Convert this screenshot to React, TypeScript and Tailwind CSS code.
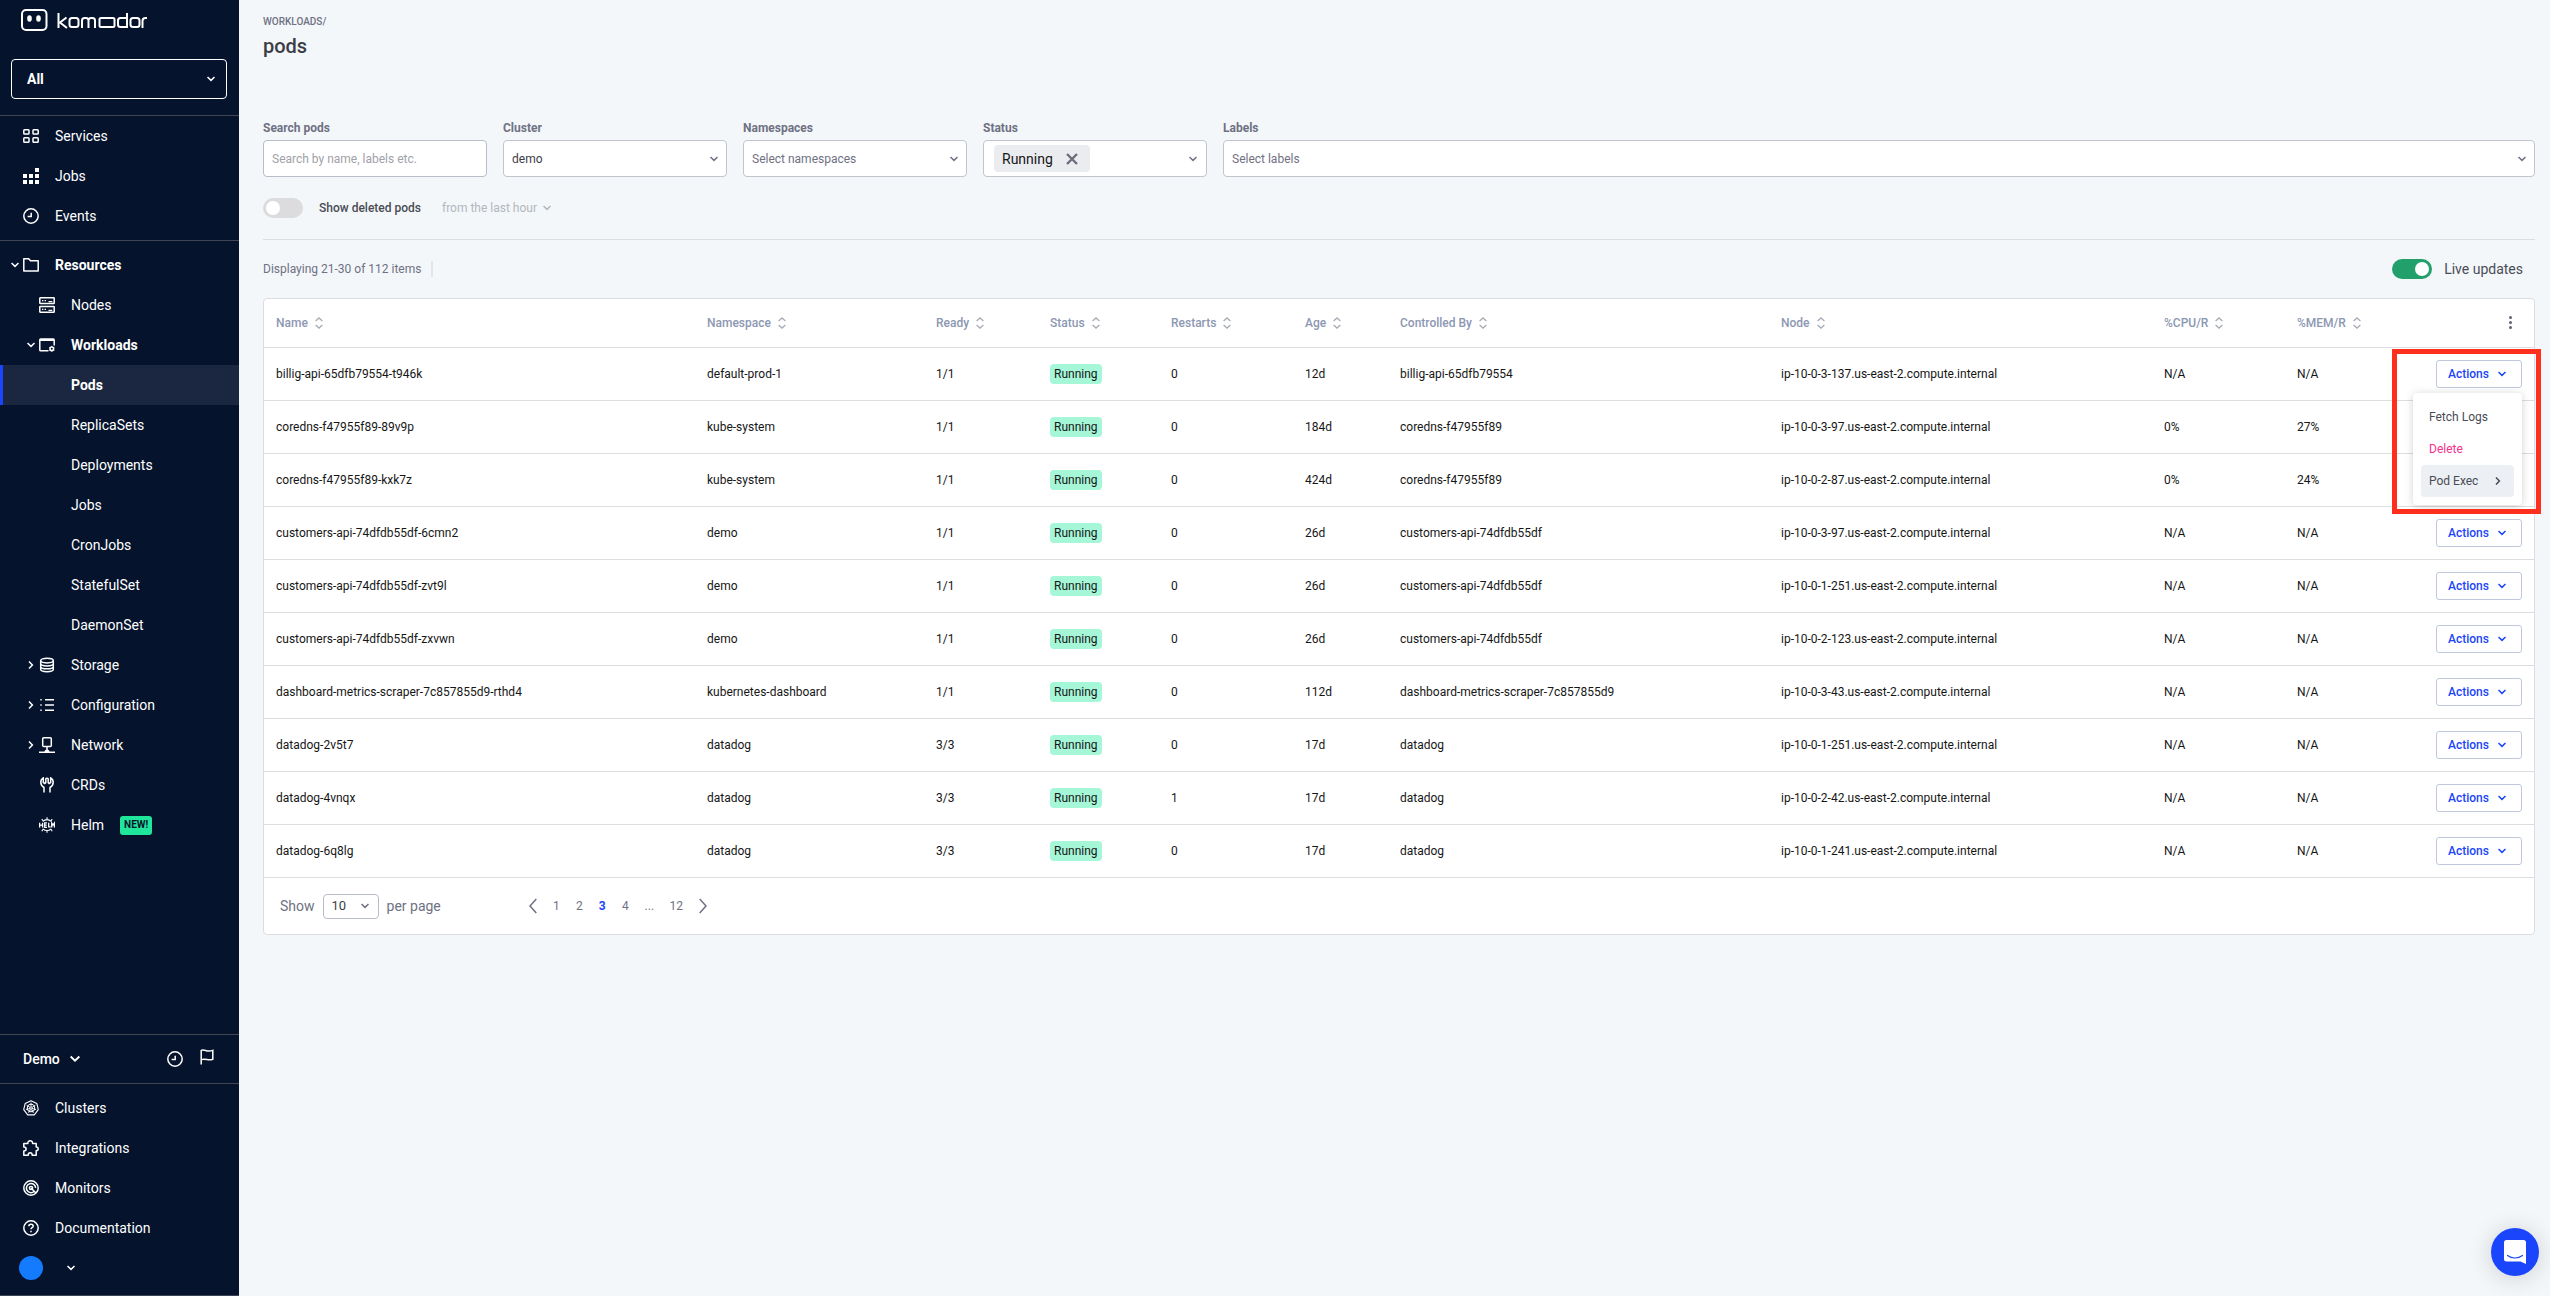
import React, { useState } from "react";

type NavItem = {
  label: string;
  icon?: React.ReactNode;
  level: 0 | 1;
  caret?: "open" | "closed";
  bold?: boolean;
  active?: boolean;
  badge?: string;
};

type Pod = {
  name: string;
  namespace: string;
  ready: string;
  restarts: number;
  age: string;
  controlledBy: string;
  node: string;
  cpu: string;
  mem: string;
};

const Icon: React.FC<{
  children: React.ReactNode;
  className?: string;
  box?: string;
}> = ({ children, className = "size-4", box = "0 0 16 16" }) => (
  <svg
    viewBox={box}
    className={`shrink-0 ${className}`}
    fill="none"
    stroke="currentColor"
    strokeWidth="1.5"
    aria-hidden="true"
  >
    {children}
  </svg>
);

const Chevron: React.FC<{ className?: string }> = ({
  className = "size-2",
}) => (
  <Icon box="0 0 8 8" className={className}>
    <path d="M0.5 2 4 5.4 7.5 2" />
  </Icon>
);

const ServicesIcon = () => (
  <Icon>
    <rect x="0.8" y="1.7" width="5.2" height="4.4" rx="0.8" />
    <rect x="10" y="1.7" width="5.2" height="4.4" rx="0.8" />
    <rect x="0.8" y="9.8" width="5.2" height="4.4" rx="0.8" />
    <rect x="10" y="9.8" width="5.2" height="4.4" rx="0.8" />
  </Icon>
);

const JobsIcon = () => (
  <Icon>
    <path
      stroke="none"
      fill="currentColor"
      d="M12 0h4v4h-4zM0 6h4v4H0zM6 6h4v4H6zM12 6h4v4h-4zM0 12h4v4H0zM6 12h4v4H6zM12 12h4v4h-4z"
    />
  </Icon>
);

const ClockIcon = () => (
  <Icon>
    <circle cx="8" cy="8" r="7.2" />
    <path d="M8.2 4.8v3.8H4.6" />
  </Icon>
);

const FolderIcon = () => (
  <Icon>
    <path d="M0.8 14V1.7h4.9l1.8 2.1h7.7V14z" strokeLinejoin="round" />
  </Icon>
);

const NodesIcon = () => (
  <Icon>
    <rect x="0.8" y="0.8" width="14.4" height="5.6" rx="0.5" />
    <rect x="0.8" y="9.6" width="14.4" height="5.6" rx="0.5" />
    <path
      d="M3 3.6h1.4M5.6 3.6H7M3 12.4h1.4M5.6 12.4H7M9.5 4.6h3.8M9.5 13.4h3.8"
      strokeWidth="1.2"
    />
  </Icon>
);

const WorkloadsIcon = () => (
  <Icon>
    <path d="M9.5 13.8H1.7a.9.9 0 0 1-.9-.9V3a.9.9 0 0 1 .9-.9h12.6a.9.9 0 0 1 .9.9v5.6" />
    <path d="M1 3h14" strokeWidth="2" />
    <circle cx="12.8" cy="11.8" r="1.8" strokeWidth="1.6" />
    <path
      d="M12.8 8.9v1M12.8 13.7v1M10.3 10.3l.8.5M14.5 12.8l.8.5M10.3 13.3l.8-.5M14.5 10.8l.8-.5"
      strokeWidth="1"
    />
  </Icon>
);

const StorageIcon = () => (
  <Icon>
    <ellipse cx="8" cy="3.6" rx="6.3" ry="2.3" />
    <path d="M1.7 3.6v8.7c0 1.3 2.8 2.4 6.3 2.4s6.3-1.1 6.3-2.4V3.6M1.7 6.5c0 1.3 2.8 2.4 6.3 2.4s6.3-1.1 6.3-2.4M1.7 9.4c0 1.3 2.8 2.4 6.3 2.4s6.3-1.1 6.3-2.4" />
  </Icon>
);

const ConfigurationIcon = () => (
  <Icon>
    <path d="M6 2.7h9M6 8h9M6 13.3h9" />
    <path d="M1 2.7h2M1 8h2M1 13.3h2" opacity="0.7" />
  </Icon>
);

const NetworkIcon = () => (
  <Icon>
    <rect x="3.7" y="0.8" width="8.6" height="8.6" rx="1" />
    <path d="M8 9.5v4M0 15.2h16" />
    <path d="M5.5 15a2.5 2.5 0 0 1 5 0z" fill="currentColor" stroke="none" />
  </Icon>
);

const CrdsIcon = () => (
  <Icon>
    <path d="M5 15.5v-5C3 9.4 1.8 7.7 1.8 5.3c0-2 .9-3.5 2.5-4.4v4.6l1.6 1 .9-.8V1.8c.4-.8 2-.8 2.4 0v3.9l.9.8 1.6-1V.9c1.6.9 2.5 2.4 2.5 4.4 0 2.4-1.2 4.1-3.2 5.2v5" />
  </Icon>
);

const HelmIcon = () => (
  <Icon>
    <path
      d="M.6 5.8v4.6M3.6 5.8v4.6M.6 8.1h3M8 5.8H5.7v4.6H8M5.7 8.1h2M9.7 5.8v4.1h2M12.7 10.4V6l1.3 2 1.4-2v4.4"
      strokeWidth="1.3"
    />
    <path
      d="M4 4.4a5.4 5.4 0 0 1 8 0M4 11.8a5.4 5.4 0 0 0 8 0M8 2.6V.2M8 15.8v-2.4M4.2 4.2 2.8 2M11.8 4.2 13.2 2M4.2 12l-1.4 2.2M11.8 12l1.4 2.2"
      strokeWidth="1.1"
    />
  </Icon>
);

const ClustersIcon = () => (
  <Icon>
    <path
      d="M8 .7 13.8 3.4l1.5 6.2-4 5.3H4.7l-4-5.3 1.5-6.2z"
      strokeWidth="1.1"
      strokeLinejoin="round"
    />
    <circle cx="8" cy="8" r="3.7" strokeWidth="1.1" />
    <circle cx="8" cy="8" r="1.2" strokeWidth="1" />
    <path
      d="M8 2.6v4M8 9.4v2.3M3.6 5.2 7 7.4M12.4 5.2 9 7.4M2.9 9.6l4-1.2M13.1 9.6l-4-1.2M5.6 12.9l1.6-3.8M10.4 12.9 8.8 9.1"
      strokeWidth="0.9"
    />
  </Icon>
);

const IntegrationsIcon = () => (
  <Icon>
    <path
      d="M.8 3.4h4.1C4.6 1.8 5.7.8 7.2.8s2.6 1 2.3 2.6h3.7v3.5c1.3 0 2 .8 2 1.9s-.7 1.9-2 1.9v4.5h-4c0-1.6-.8-2.4-2-2.4s-2 .8-2 2.4H.8v-4.3c1.5 0 2.3-.8 2.3-2s-.8-2-2.3-2z"
      strokeLinejoin="round"
    />
  </Icon>
);

const MonitorsIcon = () => (
  <Icon>
    <circle cx="8" cy="8" r="7.2" />
    <path d="M11.3 11.3A4.6 4.6 0 1 1 12.6 8" />
    <circle cx="8" cy="8" r="1.6" />
    <path d="m8 8 5.2 5.2" />
  </Icon>
);

const HelpIcon = () => (
  <Icon>
    <circle cx="8" cy="8" r="7.2" />
    <path d="M5.8 6.3c0-1.3 1-2 2.2-2s2.2.8 2.2 1.9c0 1.5-2.2 1.5-2.2 3.1" />
    <path d="M8 10.7v1.5" />
  </Icon>
);

const FlagIcon = () => (
  <Icon>
    <path d="M2.2 15.5V1.4c2-1 4 .1 5.8.5s3.8.2 5.8-.5v8.8c-2 .8-4 .7-5.8.3s-3.8-.8-5.8.2" />
  </Icon>
);

const SortIcon = () => (
  <Icon box="0 0 8 12" className="w-2 h-3 text-[#a9abb5]">
    <path d="M.6 3.9 4 .9l3.4 3M.6 8.1l3.4 3 3.4-3" strokeWidth="1.3" />
  </Icon>
);

const Logo = () => (
  <svg
    viewBox="0 0 128 24"
    className="h-6 w-32"
    fill="none"
    stroke="white"
    strokeWidth="2"
    role="img"
    aria-label="komodor"
  >
    <rect x="1" y="2" width="24.5" height="20" rx="4" />
    <ellipse cx="8.5" cy="10.5" rx="2.3" ry="3.2" fill="white" stroke="none" />
    <ellipse cx="17.5" cy="10.5" rx="2.3" ry="3.2" fill="white" stroke="none" />
    <path d="M37.5 5v15M45.5 9.5l-6.500 5 7 5.5M39.5 14.5h-2" />
    <rect x="48.5" y="10" width="9" height="9" rx="2.5" />
    <path d="M61 20v-7.5a2.5 2.5 0 0 1 2.5-2.5h1.5a2.5 2.5 0 0 1 2.5 2.5V20M67.5 12.5a2.5 2.5 0 0 1 2.5-2.5h1.5a2.5 2.5 0 0 1 2.5 2.5V20" />
    <rect x="78.5" y="10" width="15" height="9" rx="1.5" />
    <path d="M106 5v14h-6.5a2.5 2.5 0 0 1-2.5-2.5v-4a2.5 2.5 0 0 1 2.5-2.5h6.5" />
    <rect x="109.5" y="10" width="9" height="9" rx="2.5" />
    <path d="M121.5 20v-7a3 3 0 0 1 3-3h1.5" />
  </svg>
);

const mainNav: NavItem[] = [
  { label: "Services", icon: <ServicesIcon />, level: 0 },
  { label: "Jobs", icon: <JobsIcon />, level: 0 },
  { label: "Events", icon: <ClockIcon />, level: 0 },
];

const resourceNav: NavItem[] = [
  { label: "Resources", icon: <FolderIcon />, level: 0, caret: "open", bold: true },
  { label: "Nodes", icon: <NodesIcon />, level: 1 },
  { label: "Workloads", icon: <WorkloadsIcon />, level: 1, caret: "open", bold: true },
  { label: "Pods", level: 1, bold: true, active: true },
  { label: "ReplicaSets", level: 1 },
  { label: "Deployments", level: 1 },
  { label: "Jobs", level: 1 },
  { label: "CronJobs", level: 1 },
  { label: "StatefulSet", level: 1 },
  { label: "DaemonSet", level: 1 },
  { label: "Storage", icon: <StorageIcon />, level: 1, caret: "closed" },
  { label: "Configuration", icon: <ConfigurationIcon />, level: 1, caret: "closed" },
  { label: "Network", icon: <NetworkIcon />, level: 1, caret: "closed" },
  { label: "CRDs", icon: <CrdsIcon />, level: 1 },
  { label: "Helm", icon: <HelmIcon />, level: 1, badge: "NEW!" },
];

const bottomNav: NavItem[] = [
  { label: "Clusters", icon: <ClustersIcon />, level: 0 },
  { label: "Integrations", icon: <IntegrationsIcon />, level: 0 },
  { label: "Monitors", icon: <MonitorsIcon />, level: 0 },
  { label: "Documentation", icon: <HelpIcon />, level: 0 },
];

const columns = [
  { label: "Name", width: "w-[431px]" },
  { label: "Namespace", width: "w-[229px]" },
  { label: "Ready", width: "w-[114px]" },
  { label: "Status", width: "w-[121px]" },
  { label: "Restarts", width: "w-[134px]" },
  { label: "Age", width: "w-[95px]" },
  { label: "Controlled By", width: "w-[381px]" },
  { label: "Node", width: "w-[383px]" },
  { label: "%CPU/R", width: "w-[133px]" },
  { label: "%MEM/R", width: "w-[132px]" },
];

const pods: Pod[] = [
  { name: "billig-api-65dfb79554-t946k", namespace: "default-prod-1", ready: "1/1", restarts: 0, age: "12d", controlledBy: "billig-api-65dfb79554", node: "ip-10-0-3-137.us-east-2.compute.internal", cpu: "N/A", mem: "N/A" },
  { name: "coredns-f47955f89-89v9p", namespace: "kube-system", ready: "1/1", restarts: 0, age: "184d", controlledBy: "coredns-f47955f89", node: "ip-10-0-3-97.us-east-2.compute.internal", cpu: "0%", mem: "27%" },
  { name: "coredns-f47955f89-kxk7z", namespace: "kube-system", ready: "1/1", restarts: 0, age: "424d", controlledBy: "coredns-f47955f89", node: "ip-10-0-2-87.us-east-2.compute.internal", cpu: "0%", mem: "24%" },
  { name: "customers-api-74dfdb55df-6cmn2", namespace: "demo", ready: "1/1", restarts: 0, age: "26d", controlledBy: "customers-api-74dfdb55df", node: "ip-10-0-3-97.us-east-2.compute.internal", cpu: "N/A", mem: "N/A" },
  { name: "customers-api-74dfdb55df-zvt9l", namespace: "demo", ready: "1/1", restarts: 0, age: "26d", controlledBy: "customers-api-74dfdb55df", node: "ip-10-0-1-251.us-east-2.compute.internal", cpu: "N/A", mem: "N/A" },
  { name: "customers-api-74dfdb55df-zxvwn", namespace: "demo", ready: "1/1", restarts: 0, age: "26d", controlledBy: "customers-api-74dfdb55df", node: "ip-10-0-2-123.us-east-2.compute.internal", cpu: "N/A", mem: "N/A" },
  { name: "dashboard-metrics-scraper-7c857855d9-rthd4", namespace: "kubernetes-dashboard", ready: "1/1", restarts: 0, age: "112d", controlledBy: "dashboard-metrics-scraper-7c857855d9", node: "ip-10-0-3-43.us-east-2.compute.internal", cpu: "N/A", mem: "N/A" },
  { name: "datadog-2v5t7", namespace: "datadog", ready: "3/3", restarts: 0, age: "17d", controlledBy: "datadog", node: "ip-10-0-1-251.us-east-2.compute.internal", cpu: "N/A", mem: "N/A" },
  { name: "datadog-4vnqx", namespace: "datadog", ready: "3/3", restarts: 1, age: "17d", controlledBy: "datadog", node: "ip-10-0-2-42.us-east-2.compute.internal", cpu: "N/A", mem: "N/A" },
  { name: "datadog-6q8lg", namespace: "datadog", ready: "3/3", restarts: 0, age: "17d", controlledBy: "datadog", node: "ip-10-0-1-241.us-east-2.compute.internal", cpu: "N/A", mem: "N/A" },
];

const NavLink: React.FC<{ item: NavItem }> = ({ item }) => (
  <li>
    <a
      href="#"
      aria-current={item.active ? "page" : undefined}
      className={`flex h-10 items-center border-l-[3px] text-sm ${
        item.active ? "border-[#1b45fb] bg-[#1b2740]" : "border-transparent"
      } ${item.bold ? "font-bold" : ""} ${item.level === 1 ? "pl-6" : "pl-2"}`}
    >
      <span className="flex w-3 justify-start">
        {item.caret && (
          <Chevron
            className={item.caret === "closed" ? "size-2 -rotate-90" : "size-2"}
          />
        )}
      </span>
      <span className="mr-4 w-4">{item.icon}</span>
      {item.label}
      {item.badge && (
        <span className="ml-4 flex h-[19px] items-center rounded-[3px] bg-[#20e69c] px-1 text-[10px] font-bold text-[#07142d]">
          {item.badge}
        </span>
      )}
    </a>
  </li>
);

const Sidebar = () => (
  <aside className="flex w-[239px] shrink-0 flex-col border-b border-[#3b4356] bg-[#05132d] text-white">
    <div className="flex flex-col gap-[27px] border-b border-[#404654] pt-2 pr-3 pb-4 pl-[11px]">
      <div className="pl-[10px]">
        <Logo />
      </div>
      <div className="relative">
        <select
          aria-label="Workspace"
          className="h-10 w-full appearance-none rounded border border-white bg-transparent pl-[15px] text-sm font-bold"
        >
          <option>All</option>
        </select>
        <Chevron className="pointer-events-none absolute top-4 right-3 size-2" />
      </div>
    </div>
    <ul className="border-b border-[#404654] pb-1">
      {mainNav.map((item) => (
        <NavLink key={item.label} item={item} />
      ))}
    </ul>
    <ul className="flex-1 pt-1">
      {resourceNav.map((item, i) => (
        <NavLink key={i} item={item} />
      ))}
    </ul>
    <div className="flex h-[50px] items-center border-y border-[#404654] pr-6 pl-[23px]">
      <button className="flex items-center gap-[10px] text-sm font-medium">
        Demo
        <Chevron className="size-[10px]" />
      </button>
      <div className="ml-auto flex items-center gap-4">
        <button aria-label="History">
          <ClockIcon />
        </button>
        <button aria-label="Flags" className="pb-1">
          <FlagIcon />
        </button>
      </div>
    </div>
    <ul className="pt-1">
      {bottomNav.map((item) => (
        <NavLink key={item.label} item={item} />
      ))}
    </ul>
    <button
      aria-label="Account"
      className="mb-[7px] flex h-10 items-center gap-6 pl-[19px]"
    >
      <span className="size-6 rounded-full bg-[#147bff]" />
      <Chevron />
    </button>
  </aside>
);

const SelectField: React.FC<{
  id: string;
  label: string;
  value: string;
  filled?: boolean;
  className?: string;
}> = ({ id, label, value, filled, className = "w-56" }) => (
  <div className={className}>
    <label htmlFor={id} className="block pb-1 text-xs font-bold">
      {label}
    </label>
    <div className="relative">
      <select
        id={id}
        className={`h-[37px] w-full appearance-none rounded border border-[#c3c5cc] bg-white px-2 text-xs ${
          filled ? "text-[#3d4048]" : ""
        }`}
      >
        <option>{value}</option>
      </select>
      <Chevron className="pointer-events-none absolute top-[15px] right-[9px] size-2" />
    </div>
  </div>
);

const Toggle: React.FC<{
  id: string;
  checked: boolean;
  onChange: (v: boolean) => void;
}> = ({ id, checked, onChange }) => (
  <span
    className={`relative flex h-5 w-10 items-center rounded-full px-[3px] ${
      checked ? "justify-end bg-[#22a06b]" : "justify-start bg-[#dcdcde]"
    }`}
  >
    <input
      id={id}
      type="checkbox"
      checked={checked}
      onChange={(e) => onChange(e.target.checked)}
      className="absolute inset-0 appearance-none"
    />
    <span className="size-[14px] rounded-full bg-white" />
  </span>
);

const ActionsMenu = () => (
  <>
    <div className="absolute top-[45px] right-3 z-10 flex w-[109px] flex-col rounded bg-white p-2 text-left text-[#4a4c55] shadow-[0_1px_8px_rgba(0,0,0,0.18)]">
      <button className="h-8 px-2 text-left">Fetch Logs</button>
      <button className="h-8 px-2 text-left text-[#f5318b]">Delete</button>
      <button className="flex h-8 items-center justify-between rounded bg-[#eceff3] pr-3 pl-2">
        Pod Exec
        <Chevron className="size-2 -rotate-90" />
      </button>
    </div>
    <div className="pointer-events-none absolute top-px -right-[7px] z-20 h-[165px] w-[149px] border-[5px] border-[#ff2f1e]" />
  </>
);

const PodsTable: React.FC<{
  openRow: number | null;
  onToggle: (i: number) => void;
}> = ({ openRow, onToggle }) => (
  <table className="w-full table-fixed text-left text-xs">
    <thead>
      <tr className="h-12 text-[#8c97b2]">
        {columns.map((c) => (
          <th key={c.label} className={`${c.width} px-3 font-medium`}>
            <button className="flex items-center gap-[7px]">
              {c.label}
              <SortIcon />
            </button>
          </th>
        ))}
        <th className="pr-[18px]">
          <button
            aria-label="Table options"
            className="ml-auto flex w-3 flex-col items-center gap-[2px]"
          >
            <span className="size-[3px] rounded-full bg-[#5f6273]" />
            <span className="size-[3px] rounded-full bg-[#5f6273]" />
            <span className="size-[3px] rounded-full bg-[#5f6273]" />
          </button>
        </th>
      </tr>
    </thead>
    <tbody className="text-[#161616]">
      {pods.map((p, i) => (
        <tr key={p.name} className="h-[53px] border-t border-[#dcdde0]">
          <td className="px-3">{p.name}</td>
          <td className="px-3">{p.namespace}</td>
          <td className="px-3">{p.ready}</td>
          <td className="px-3">
            <span className="inline-flex h-5 items-center rounded bg-[#a5f7d8] px-1">
              Running
            </span>
          </td>
          <td className="px-3">{p.restarts}</td>
          <td className="px-3">{p.age}</td>
          <td className="px-3">{p.controlledBy}</td>
          <td className="px-3">{p.node}</td>
          <td className="px-3">{p.cpu}</td>
          <td className="px-3">{p.mem}</td>
          <td className="relative pr-3 text-right">
            <button
              onClick={() => onToggle(i)}
              className="inline-flex h-7 w-[86px] items-center gap-[9px] rounded-[3px] border border-[#c0c8de] bg-white pl-[11px] font-medium text-[#1b45fb]"
            >
              Actions
              <Chevron />
            </button>
            {openRow === i && <ActionsMenu />}
          </td>
        </tr>
      ))}
    </tbody>
  </table>
);

const Pagination = () => (
  <div className="flex h-[57px] items-center border-t border-[#dcdde0] pl-4 text-sm">
    <label htmlFor="page-size">Show</label>
    <div className="relative mx-2">
      <select
        id="page-size"
        className="h-[25px] w-14 appearance-none rounded border border-[#b9bcc9] bg-white pl-2 text-[13px] text-[#3d4048]"
      >
        <option>10</option>
      </select>
      <Chevron className="pointer-events-none absolute top-2 right-[10px] size-2" />
    </div>
    per page
    <nav aria-label="Pages" className="ml-[88px] flex items-center text-xs">
      <button aria-label="Previous page" className="mr-2">
        <Icon box="0 0 8 16" className="h-4 w-2">
          <path d="M7.3 1 1 8l6.3 7" />
        </Icon>
      </button>
      <button className="w-[23px]">1</button>
      <button className="w-[23px]">2</button>
      <button className="w-[23px] font-bold text-[#1b45fb]">3</button>
      <button className="w-[23px]">4</button>
      <span className="w-[25px] text-center">...</span>
      <button className="w-[29px]">12</button>
      <button aria-label="Next page" className="ml-2">
        <Icon box="0 0 8 16" className="h-4 w-2">
          <path d="M.7 1 7 8l-6.3 7" />
        </Icon>
      </button>
    </nav>
  </div>
);

const App: React.FC = () => {
  const [showDeleted, setShowDeleted] = useState(false);
  const [live, setLive] = useState(true);
  const [openRow, setOpenRow] = useState<number | null>(0);

  return (
    <div className="flex min-h-screen bg-[#f3f7fa] font-['Roboto',sans-serif] text-[#6f7183]">
      <Sidebar />
      <main className="min-w-0 flex-1 pt-[14px] pr-[15px] pl-6">
        <header className="flex flex-col">
          <a href="#" className="text-[10px] leading-4 font-medium">
            WORKLOADS/
          </a>
          <h1 className="text-xl leading-8 font-medium text-[#3b3d46]">pods</h1>
        </header>

        <form className="mt-[58px] flex items-start gap-4">
          <div className="w-56">
            <label htmlFor="search" className="block pb-1 text-xs font-bold">
              Search pods
            </label>
            <input
              id="search"
              placeholder="Search by name, labels etc."
              className="h-[37px] w-full rounded border border-[#b9bcc9] bg-white px-2 text-xs placeholder:text-[#a0a2a8]"
            />
          </div>
          <SelectField id="cluster" label="Cluster" value="demo" filled />
          <SelectField id="namespaces" label="Namespaces" value="Select namespaces" />
          <div className="w-56">
            <label htmlFor="status" className="block pb-1 text-xs font-bold">
              Status
            </label>
            <div className="flex h-[37px] items-center rounded border border-[#c3c5cc] bg-white pr-[9px] pl-[10px]">
              <span className="flex h-[27px] items-center gap-[13px] rounded bg-[#eaecf0] pr-3 pl-2 text-sm text-[#161616]">
                Running
                <button type="button" aria-label="Remove Running" className="text-[#6a6e7c]">
                  <Icon box="0 0 12 12" className="size-3">
                    <path d="m1 1 10 10M11 1 1 11" strokeWidth="2.4" />
                  </Icon>
                </button>
              </span>
              <button
                id="status"
                type="button"
                aria-label="Status"
                className="flex h-full flex-1 items-center justify-end"
              >
                <Chevron />
              </button>
            </div>
          </div>
          <SelectField id="labels" label="Labels" value="Select labels" className="flex-1" />
        </form>

        <div className="mt-[21px] flex items-center border-b border-[#dcdde0] pb-[21px] text-xs">
          <Toggle id="deleted" checked={showDeleted} onChange={setShowDeleted} />
          <label htmlFor="deleted" className="ml-4 font-medium text-[#4a4c55]">
            Show deleted pods
          </label>
          <button className="ml-[21px] flex items-center gap-[6px] text-[#b3b6bd]" disabled>
            from the last hour
            <Chevron />
          </button>
        </div>

        <div className="flex h-[58px] items-center justify-between pr-3">
          <p className="border-r-2 border-[#e3e5ea] pr-[10px] text-xs">
            Displaying 21-30 of 112 items
          </p>
          <div className="flex items-center gap-3">
            <Toggle id="live" checked={live} onChange={setLive} />
            <label htmlFor="live" className="text-sm text-[#4a4c55]">
              Live updates
            </label>
          </div>
        </div>

        <section className="rounded border border-[#dcdde0] bg-white">
          <PodsTable
            openRow={openRow}
            onToggle={(i) => setOpenRow(openRow === i ? null : i)}
          />
          <Pagination />
        </section>
      </main>

      {/* Chat launcher */}
      <button
        aria-label="Open chat"
        className="fixed right-[11px] bottom-5 flex size-12 items-center justify-center rounded-full bg-[#1b45fb] shadow-[0_2px_24px_rgba(0,0,0,0.16)]"
      >
        <svg viewBox="0 0 22 24" className="h-6 w-[22px]" aria-hidden="true">
          <path
            d="M2.5 0h17A2.5 2.5 0 0 1 22 2.5V24l-5.5-2.5h-14A2.5 2.5 0 0 1 0 19V2.5A2.5 2.5 0 0 1 2.5 0z"
            fill="white"
          />
          <path
            d="M3.5 15.5c4.5 3.3 10.5 3.3 15 0"
            fill="none"
            stroke="#1b45fb"
            strokeWidth="1.2"
            strokeLinecap="round"
          />
        </svg>
      </button>
    </div>
  );
};

export default App;
